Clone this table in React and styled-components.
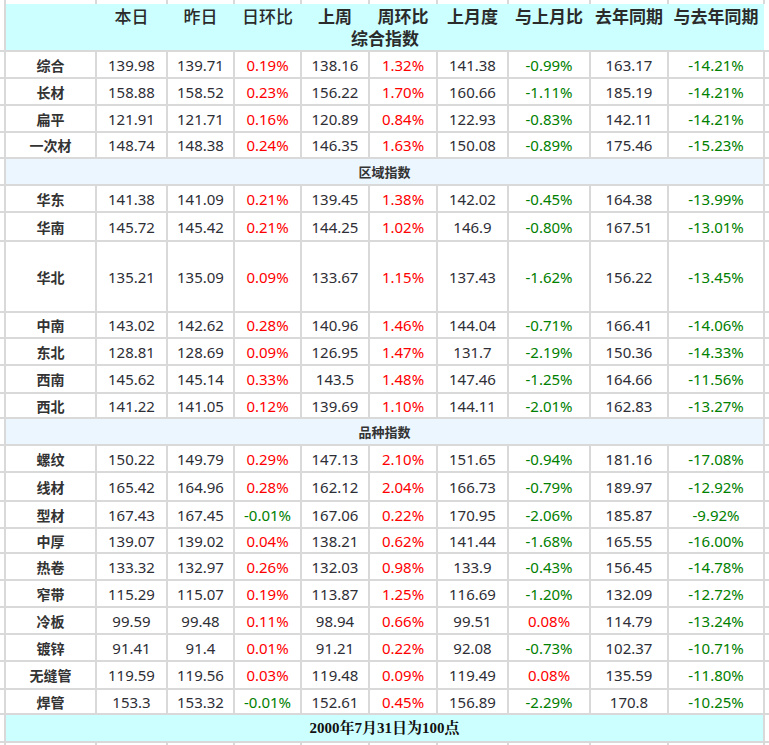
import React from "react";
import styled, { createGlobalStyle } from "styled-components";

const GlobalStyle = createGlobalStyle`
  html, body {
    margin: 0;
    padding: 0;
    background: #ffffff;
  }
  body {
    font-family: "Noto Sans", "Noto Sans CJK SC", sans-serif;
  }
`;

const COLS = [5, 91, 71, 67, 67, 68, 68, 71, 82, 78, 96, 12];
const LABELS = [
  { text: "本日", strong: false },
  { text: "昨日", strong: false },
  { text: "日环比", strong: false },
  { text: "上周", strong: true },
  { text: "周环比", strong: true },
  { text: "上月度", strong: true },
  { text: "与上月比", strong: true },
  { text: "去年同期", strong: true },
  { text: "与去年同期", strong: true },
];

// 每行: 名称, 数据(9 列), 行距(含线)
const SECTIONS = [
  {
    title: null,
    rows: [
      ["综合", "139.98 139.71 0.19% 138.16 1.32% 141.38 -0.99% 163.17 -14.21%", 27],
      ["长材", "158.88 158.52 0.23% 156.22 1.70% 160.66 -1.11% 185.19 -14.21%", 27],
      ["扁平", "121.91 121.71 0.16% 120.89 0.84% 122.93 -0.83% 142.11 -14.21%", 27],
      ["一次材", "148.74 148.38 0.24% 146.35 1.63% 150.08 -0.89% 175.46 -15.23%", 26],
    ],
  },
  {
    title: "区域指数",
    rows: [
      ["华东", "141.38 141.09 0.21% 139.45 1.38% 142.02 -0.45% 164.38 -13.99%", 27],
      ["华南", "145.72 145.42 0.21% 144.25 1.02% 146.9 -0.80% 167.51 -13.01%", 29],
      ["华北", "135.21 135.09 0.09% 133.67 1.15% 137.43 -1.62% 156.22 -13.45%", 71],
      ["中南", "143.02 142.62 0.28% 140.96 1.46% 144.04 -0.71% 166.41 -14.06%", 26],
      ["东北", "128.81 128.69 0.09% 126.95 1.47% 131.7 -2.19% 150.36 -14.33%", 27],
      ["西南", "145.62 145.14 0.33% 143.5 1.48% 147.46 -1.25% 164.66 -11.56%", 28],
      ["西北", "141.22 141.05 0.12% 139.69 1.10% 144.11 -2.01% 162.83 -13.27%", 25],
    ],
  },
  {
    title: "品种指数",
    rows: [
      ["螺纹", "150.22 149.79 0.29% 147.13 2.10% 151.65 -0.94% 181.16 -17.08%", 27],
      ["线材", "165.42 164.96 0.28% 162.12 2.04% 166.73 -0.79% 189.97 -12.92%", 29],
      ["型材", "167.43 167.45 -0.01% 167.06 0.22% 170.95 -2.06% 185.87 -9.92%", 27],
      ["中厚", "139.07 139.02 0.04% 138.21 0.62% 141.44 -1.68% 165.55 -16.00%", 25],
      ["热卷", "133.32 132.97 0.26% 132.03 0.98% 133.9 -0.43% 156.45 -14.78%", 27],
      ["窄带", "115.29 115.07 0.19% 113.87 1.25% 116.69 -1.20% 132.09 -12.72%", 27],
      ["冷板", "99.59 99.48 0.11% 98.94 0.66% 99.51 0.08% 114.79 -13.24%", 27],
      ["镀锌", "91.41 91.4 0.01% 91.21 0.22% 92.08 -0.73% 102.37 -10.71%", 27],
      ["无缝管", "119.59 119.56 0.03% 119.48 0.09% 119.49 0.08% 135.59 -11.80%", 28],
      ["焊管", "153.3 153.32 -0.01% 152.61 0.45% 156.89 -2.29% 170.8 -10.25%", 25],
    ],
  },
];

const toneOf = (value) => {
  if (!value.endsWith("%")) return "plain";
  return value.startsWith("-") ? "down" : "up";
};

// 单元格高度不含 2px 格线
const inner = (pitch) => pitch - 2;

const App = () => {
  return (
    <>
      <GlobalStyle />
      <Sheet>
        <Grid>
          <colgroup>
            {COLS.map((w, i) => (
              <col key={i} style={{ width: w }} />
            ))}
          </colgroup>
          <tbody>
            <tr>
              <Gap $h={4} />
              {COLS.slice(1, -1).map((_, i) => (
                <Gap key={i} $h={4} $line />
              ))}
              <Gap $h={4} $last />
            </tr>
            <tr>
              <Gap $h={23} />
              <HeadCell />
              {LABELS.map((l) => (
                <HeadCell key={l.text} $strong={l.strong}>
                  {l.text}
                </HeadCell>
              ))}
              <Gap $h={23} $edge />
            </tr>
            <tr>
              <Gap $h={23} />
              <HeadTitle colSpan={10}>综合指数</HeadTitle>
              <Gap $h={23} $edge />
            </tr>
            {SECTIONS.map((section, si) => (
              <React.Fragment key={si}>
                {section.title && (
                  <tr>
                    <Gap $h={inner(27)} $rule />
                    <Band colSpan={10}>{section.title}</Band>
                    <Gap $h={inner(27)} $rule $edge />
                  </tr>
                )}
                {section.rows.map(([name, data, h]) => (
                  <tr key={name}>
                    <Gap $h={inner(h)} $rule />
                    <Name $h={inner(h)}>{name}</Name>
                    {data.split(" ").map((v, i) => (
                      <Value key={i} $tone={toneOf(v)}>
                        {v}
                      </Value>
                    ))}
                    <Gap $h={inner(h)} $rule $edge />
                  </tr>
                ))}
              </React.Fragment>
            ))}
            <tr>
              <Gap $h={inner(28)} $rule />
              <Footer colSpan={10}>2000年7月31日为100点</Footer>
              <Gap $h={inner(28)} $rule $edge />
            </tr>
            <tr>
              <Gap $h={12} />
              {COLS.slice(1, -1).map((_, i) => (
                <Gap key={i} $h={12} $line />
              ))}
              <Gap $h={12} $last />
            </tr>
          </tbody>
        </Grid>
      </Sheet>
    </>
  );
};

export default App;

const LINE = "2px solid #d9d9d9";

const Sheet = styled.div`
  width: 769px;
  height: 745px;
  overflow: hidden;
  background: #ffffff;
`;

const Grid = styled.table`
  border-collapse: collapse;
  table-layout: fixed;
  width: ${COLS.reduce((a, b) => a + b, 0)}px;
`;

const Gap = styled.td`
  height: ${({ $h }) => $h}px;
  padding: 0;
  border-top: ${({ $rule }) => ($rule ? LINE : "none")};
  border-bottom: ${({ $rule }) => ($rule ? LINE : "none")};
  border-left: ${({ $line, $last }) => ($line || $last ? LINE : "none")};
  border-right: ${({ $edge }) => ($edge ? "none" : LINE)};
  background: #ffffff;
`;

const HeadCell = styled.td`
  height: 23px;
  padding: 0;
  border: none;
  background: #ccffff;
  text-align: center;
  vertical-align: bottom;
  font-family: "Noto Sans CJK SC", sans-serif;
  font-size: 17px;
  font-weight: ${({ $strong }) => ($strong ? 700 : 500)};
  color: #2b2b2b;
  white-space: nowrap;
  line-height: 22px;
`;

const HeadTitle = styled.td`
  height: 23px;
  padding: 0;
  border: none;
  background: #ccffff;
  text-align: center;
  vertical-align: top;
  font-family: "Noto Sans CJK SC", sans-serif;
  font-size: 17px;
  font-weight: 700;
  color: #2b2b2b;
  line-height: 22px;
`;

const Band = styled.td`
  padding: 0;
  border: ${LINE};
  background: #ebf6ff;
  text-align: center;
  font-family: "Noto Sans CJK SC", sans-serif;
  font-size: 13px;
  font-weight: 700;
  color: #333333;
  line-height: 18px;
`;

const Footer = styled(Band)`
  background: #ccffff;
  font-family: "Liberation Serif", "Noto Serif CJK SC", "Noto Sans CJK SC", serif;
  font-size: 15px;
  color: #111111;
`;

const Name = styled.td`
  height: ${({ $h }) => $h}px;
  padding: 0;
  border: ${LINE};
  text-align: center;
  font-family: "Noto Sans CJK SC", sans-serif;
  font-size: 14px;
  font-weight: 700;
  color: #333333;
  white-space: nowrap;
  line-height: 18px;
`;

const Value = styled.td`
  padding: 0;
  border: ${LINE};
  text-align: center;
  font-family: "Noto Sans", "Noto Sans CJK SC", sans-serif;
  font-size: 15px;
  line-height: 18px;
  white-space: nowrap;
  color: ${({ $tone }) =>
    $tone === "up" ? "#ff0000" : $tone === "down" ? "#008000" : "#2e2e36"};
`;
